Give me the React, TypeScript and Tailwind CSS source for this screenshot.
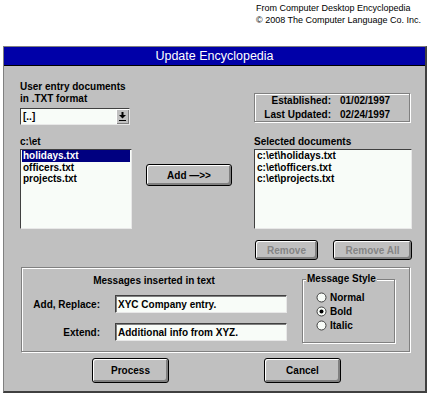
import type { ReactNode } from "react";

const font = "font-['Liberation_Sans',Arial,sans-serif]";

function Btn({ children, className = "", disabled = false }: { children: ReactNode; className?: string; disabled?: boolean }) {
  return (
    <div
      className={`flex items-center justify-center rounded-[3px] border border-black bg-[#c0c0c0] text-[10px] font-bold shadow-[inset_1px_1px_0_#fff,inset_-2px_-2px_0_#808080] ${
        disabled ? "text-[#858585]" : "text-black"
      } ${className}`}
    >
      {children}
    </div>
  );
}

function ListBox({ items, selected, className = "" }: { items: string[]; selected?: number; className?: string }) {
  return (
    <div className={`border border-t-[#404040] border-l-[#404040] border-r-[#e8e8e8] border-b-[#e8e8e8] bg-[#f8fcf8] ${className}`}>
      {items.map((it, i) => (
        <div key={it} className={`mx-[1px] pl-[1px] leading-[11.5px] ${i === selected ? "bg-[#000080] text-white" : "text-black"}`}>
          {it}
        </div>
      ))}
    </div>
  );
}

function TextField({ value }: { value: string }) {
  return (
    <div className="flex h-[18px] w-[172px] items-center border border-t-[#404040] border-l-[#404040] border-r-[#e8e8e8] border-b-[#e8e8e8] bg-[#f8fcf8] pl-[2px] text-black shadow-[inset_1px_1px_0_#808080]">
      {value}
    </div>
  );
}

function Radio({ label, checked = false }: { label: string; checked?: boolean }) {
  return (
    <div className="flex h-[14px] items-center gap-[3px]">
      <svg width="11" height="11" viewBox="0 0 11 11">
        <circle cx="5.5" cy="5.5" r="4.5" fill="#f8fcf8" stroke="#404040" strokeWidth="1" />
        {checked && <circle cx="5.5" cy="5.5" r="2" fill="#000" />}
      </svg>
      <span>{label}</span>
    </div>
  );
}

export default function App() {
  return (
    <div className={`h-[398px] w-[430px] overflow-hidden bg-white ${font}`}>
      <div className="pl-[256px] pt-[2px] text-[9px] leading-[12px] text-black">
        <div>From Computer Desktop Encyclopedia</div>
        <div>© 2008 The Computer Language Co. Inc.</div>
      </div>

      <div className="ml-[3px] mt-[20px] h-[347px] w-[424px] border-l border-t border-r-2 border-b-2 border-l-[#808080] border-t-[#808080] border-r-[#404040] border-b-[#404040] bg-[#c0c0c0] text-[10px] font-bold text-black">
        <div className="flex h-[19px] items-center justify-center border-b border-black bg-[#0000a8] text-[12.5px] font-normal text-white">
          Update Encyclopedia
        </div>

        <div className="flex items-start pl-[16px] pt-[15px]">
          <div className="w-[112px]">
            <div className="leading-[11.5px]">
              User entry documents
              <br />
              in .TXT format
            </div>
            <div className="mt-[4px] flex h-[17px] w-[110px] items-center border border-t-[#404040] border-l-[#404040] border-r-[#e8e8e8] border-b-[#e8e8e8] bg-[#f8fcf8]">
              <span className="flex-1 pl-[2px]">[..]</span>
              <div className="flex h-[15px] w-[13px] items-center justify-center bg-[#c0c0c0] shadow-[inset_1px_1px_0_#fff,inset_-1px_-1px_0_#808080]">
                <svg width="7" height="9" viewBox="0 0 7 9">
                  <rect x="2.5" y="0" width="2" height="3" fill="#000" />
                  <polygon points="0,3 7,3 3.5,6.5" fill="#000" />
                  <rect x="0" y="8" width="7" height="1" fill="#000" />
                </svg>
              </div>
            </div>
            <div className="mt-[11px] leading-[12px]">c:\et</div>
            <ListBox className="mt-[1px] h-[80px] w-[112px]" items={["holidays.txt", "officers.txt", "projects.txt"]} selected={0} />
          </div>

          <Btn className="ml-[14px] mt-[83px] h-[22px] w-[86px]">Add —&gt;&gt;</Btn>

          <div className="ml-[22px] w-[158px]">
            <div className="mt-[12px] grid h-[29px] w-[156px] grid-cols-[76px_1fr] gap-x-[9px] border border-[#808080] leading-[14px] shadow-[1px_1px_0_#fff,inset_1px_1px_0_#fff]">
              <span className="text-right">Established:</span>
              <span>01/02/1997</span>
              <span className="text-right">Last Updated:</span>
              <span>02/24/1997</span>
            </div>
            <div className="mt-[14px] leading-[12px]">Selected documents</div>
            <ListBox className="mt-[1px] h-[80px] w-[158px]" items={["c:\\et\\holidays.txt", "c:\\et\\officers.txt", "c:\\et\\projects.txt"]} />
          </div>
        </div>

        <div className="mt-[11px] flex justify-end gap-[15px] pr-[13px]">
          <Btn disabled className="h-[20px] w-[63px]">Remove</Btn>
          <Btn disabled className="h-[20px] w-[79px]">Remove All</Btn>
        </div>

        <div className="ml-[17px] mt-[7px] flex h-[85px] w-[389px] border border-[#808080] shadow-[1px_1px_0_#fff,inset_1px_1px_0_#fff]">
          <div className="w-[280px]">
            <div className="mt-[7px] w-[264px] text-center leading-[12px]">Messages inserted in text</div>
            <div className="mt-[8px] flex items-center">
              <span className="w-[78px] text-right">Add, Replace:</span>
              <div className="ml-[15px]">
                <TextField value="XYC Company entry." />
              </div>
            </div>
            <div className="mt-[10px] flex items-center">
              <span className="w-[78px] text-right">Extend:</span>
              <div className="ml-[15px]">
                <TextField value="Additional info from XYZ." />
              </div>
            </div>
          </div>
          <div className="relative mt-[11px] h-[64px] w-[93px] border border-[#808080] pl-[13px] pt-[10px] shadow-[1px_1px_0_#fff,inset_1px_1px_0_#fff]">
            <span className="absolute -top-[7px] left-[3px] bg-[#c0c0c0] px-[1px] leading-[12px]">Message Style</span>
            <Radio label="Normal" />
            <Radio label="Bold" checked />
            <Radio label="Italic" />
          </div>
        </div>

        <div className="mt-[6px] flex gap-[95px] pl-[88px]">
          <Btn className="h-[25px] w-[77px]">Process</Btn>
          <Btn className="h-[25px] w-[77px]">Cancel</Btn>
        </div>
      </div>
    </div>
  );
}
